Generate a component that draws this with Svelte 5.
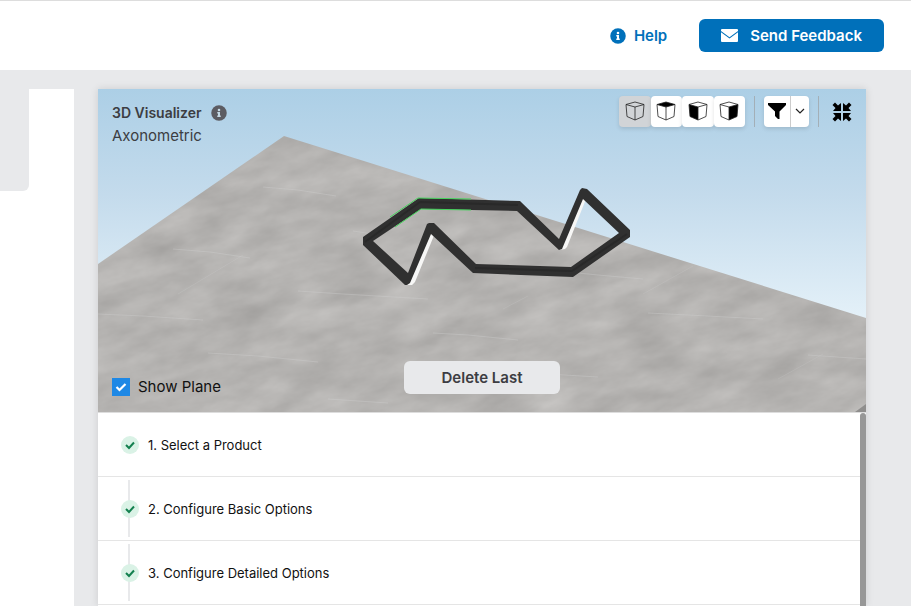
<script>
  let showPlane = $state(true);
  let view = $state('Axonometric');

  const views = [
    { name: 'Axonometric', face: '' },
    { name: 'Top', face: 'M1 3.500 10 1 19 3.500 10 6Z' },
    { name: 'Front', face: 'M1 3.500 10 6V19L2 15.500Z' },
    { name: 'Side', face: 'M19 3.500 10 6V19L18 15.500Z' }
  ];

  const steps = [
    '1. Select a Product',
    '2. Configure Basic Options',
    '3. Configure Detailed Options'
  ];
</script>

{#snippet info()}
  <svg class="info" viewBox="0 0 512 512" aria-hidden="true">
    <circle cx="256" cy="256" r="248" fill="currentColor" />
    <path class="info-mark" d="M256 118a42 42 0 1 1 0 84 42 42 0 0 1 0-84zM312 372c0 7-5 12-12 12h-88c-7 0-12-5-12-12v-24c0-7 5-12 12-12h12v-64h-12c-7 0-12-5-12-12v-24c0-7 5-12 12-12h64c7 0 12 5 12 12v100h12c7 0 12 5 12 12z" />
  </svg>
{/snippet}

<div class="page">
  <header>
    <a class="help" href="#help">{@render info()}Help</a>
    <button class="feedback" type="button">
      <svg viewBox="0 0 17 13" width="17" height="13" aria-hidden="true">
        <path d="M1 0H16Q17 0 17 1V2L8.500 8.300 0 2V1Q0 0 1 0ZM0 3.200 8.500 9.500 17 3.200V12Q17 13 16 13H1Q0 13 0 12Z" fill="#fff" />
      </svg>
      Send Feedback
    </button>
  </header>

  <main>
    <aside><div class="tab"></div></aside>

    <section class="panel">
      <div class="viewer">
        <svg class="scene" viewBox="0 0 768 323" preserveAspectRatio="xMidYMid slice" aria-hidden="true">
          <defs>
            <linearGradient id="sky" x1="0" y1="0" x2="0" y2="1">
              <stop offset="0" stop-color="#accfe6" />
              <stop offset=".33" stop-color="#c4dbec" />
              <stop offset=".7" stop-color="#e3f0f8" />
              <stop offset="1" stop-color="#eef6fb" />
            </linearGradient>
            <filter id="marble" x="0" y="0" width="100%" height="100%" color-interpolation-filters="sRGB">
              <feTurbulence type="fractalNoise" baseFrequency=".018 .045" numOctaves="5" seed="8" />
              <feColorMatrix values=".13 .05 0 0 .619  .13 .05 0 0 .612  .13 .05 0 0 .604  0 0 0 0 1" />
            </filter>
            <clipPath id="ground"><path d="M0 175 186 47 768 229V315L757 323H0Z" /></clipPath>
          </defs>
          <rect width="768" height="323" fill="url(#sky)" />
          {#if showPlane}
            <path d="M740 300H768V323H740Z" fill="#8f8e8d" />
            <g clip-path="url(#ground)">
              <g transform="rotate(-14 384 160)">
                <rect x="-80" y="-120" width="940" height="620" filter="url(#marble)" />
              </g>
              <g fill="none" stroke="#d0d0d0" stroke-opacity=".35">
                <path d="M165 98 200 101 238 107M75 160 112 163 152 169M255 142 275 145M200 202 245 205 330 210M0 225 45 227 105 231M335 244 370 246 420 251M110 264 160 267 220 273M550 224 610 227 665 230M470 183 500 186 545 190M710 266 768 270M450 285 500 288M230 310 290 314" />
                <path d="M545 205 595 177M80 205 145 166M405 220 430 207M680 290 725 265" stroke-opacity=".2" />
              </g>
            </g>
          {/if}
          <path d="M337 144 317 193 314 196 308 196 331 143ZM488 110 469 158 467 160 461 161 482 110Z" fill="#f7f7f6" />
          <path d="M265 148 321 109 422 112 461 150 482 101 484 99 489 100 532 141V148L475 188 375 184 333 145 312 194 309 196 307 196 265 156ZM275 152 310 184 329 135 331 134 336 134 378 175 473 178 521 144 485 110 464 160 461 161 419 122 323 120Z" fill="#303030" fill-rule="evenodd" />
          <path d="M267 153 322 113 420 116M377 179 474 182 529 145" fill="none" stroke="#292929" stroke-width="2" />
          <path d="M292 128 320 109 373 110M297 138 323 120 373 121" fill="none" stroke="#45d45c" />
        </svg>

        <div class="top">
          <div class="title">
            <h2>3D Visualizer {@render info()}</h2>
            <p>{view}</p>
          </div>
          <div class="tools">
            <div class="views">
              {#each views as v}
                <button type="button" class:active={view === v.name} aria-label={v.name} onclick={() => (view = v.name)}>
                  <svg viewBox="0 0 20 20" width="20" height="20" aria-hidden="true">
                    {#if v.face}<path d={v.face} fill="#000" />{/if}
                    <path d="M1 3.500 10 1 19 3.500 18 15.500 10 19 2 15.500ZM1 3.500 10 6 19 3.500M10 6V19" fill="none" stroke="#222" stroke-width=".8" stroke-linejoin="round" />
                  </svg>
                </button>
              {/each}
            </div>
            <span class="divider"></span>
            <div class="filter">
              <button type="button" aria-label="Filter">
                <svg viewBox="0 0 18 16" width="18" height="16" aria-hidden="true">
                  <path d="M0 0H18V2L11.500 8.500V16H10L7 13V8.500L0 2Z" />
                </svg>
              </button>
              <button class="more" type="button" aria-label="Filter options">
                <svg viewBox="0 0 10 6" width="10" height="6" aria-hidden="true">
                  <path d="M1 1 5 5 9 1" fill="none" stroke="#222" stroke-width="1.200" />
                </svg>
              </button>
            </div>
            <span class="divider"></span>
            <button class="shrink" type="button" aria-label="Exit full size">
              <svg viewBox="0 0 20 20" width="20" height="20" aria-hidden="true">
                <path id="arrow" d="M.5 3 3 .5 6 3.500 9 1V9H1L3.500 6Z" />
                <use href="#arrow" transform="matrix(-1 0 0 1 20 0)" />
                <use href="#arrow" transform="matrix(1 0 0 -1 0 20)" />
                <use href="#arrow" transform="matrix(-1 0 0 -1 20 20)" />
              </svg>
            </button>
          </div>
        </div>

        <div class="bottom">
          <label class="plane">
            <span class="box">
              <input type="checkbox" bind:checked={showPlane} />
              <svg viewBox="0 0 18 18" aria-hidden="true"><path d="M4.500 9 7.500 12 13.500 6" fill="none" stroke="#fff" stroke-width="2.200" /></svg>
            </span>
            Show Plane
          </label>
          <button class="delete" type="button">Delete Last</button>
        </div>
      </div>

      <div class="steps">
        <ol>
          {#each steps as step, i}
            <li class:linked={i > 0}>
              <span class="mark">
                <svg viewBox="0 0 18 18" width="18" height="18" aria-hidden="true">
                  <circle cx="9" cy="9" r="9" fill="#daf2e6" />
                  <path d="M5 9 8 12 13 6.500" fill="none" stroke="#14804f" stroke-width="2" />
                </svg>
              </span>
              {step}
            </li>
          {/each}
        </ol>
        <div class="scroll"></div>
      </div>
    </section>
  </main>
</div>

<style>
  :global(body) { margin: 0; }
  * { box-sizing: border-box; }
  .page {
    height: 100vh;
    display: flex;
    flex-direction: column;
    overflow: hidden;
    background: #e8e9eb;
    color: #111;
    font: 15px/20px Inter, "Liberation Sans", sans-serif;
  }
  button {
    display: flex;
    align-items: center;
    justify-content: center;
    padding: 0;
    border: 0;
    background: none;
    font: inherit;
    color: inherit;
    cursor: pointer;
  }
  header {
    flex: none;
    display: flex;
    align-items: center;
    justify-content: flex-end;
    gap: 32px;
    height: 70px;
    padding: 0 27px;
    border-top: 1px solid #ddd;
    background: #fff;
    font-weight: 600;
  }
  .help {
    display: flex;
    align-items: center;
    gap: 8px;
    color: #0070ba;
    text-decoration: none;
  }
  .info { width: 16px; height: 16px; flex: none; }
  .info-mark { fill: #fff; }
  .feedback {
    gap: 12px;
    height: 33px;
    padding: 0 22px;
    border-radius: 6px;
    background: #0070ba;
    color: #fff;
  }
  main {
    flex: 1;
    display: flex;
    gap: 24px;
    min-height: 0;
    padding: 19px 45px 0 0;
  }
  aside { width: 74px; flex: none; background: #fff; }
  .tab {
    width: 29px;
    height: 102px;
    border-bottom-right-radius: 6px;
    background: #e8e9eb;
  }
  .panel {
    flex: 1;
    min-width: 0;
    display: flex;
    flex-direction: column;
    background: #fff;
    box-shadow: 0 0 8px rgba(0, 0, 0, .12);
  }
  .viewer {
    position: relative;
    flex: none;
    display: flex;
    flex-direction: column;
    justify-content: space-between;
    height: 324px;
    border-bottom: 1px solid #ddd;
  }
  .scene { position: absolute; inset: 0; width: 100%; height: 100%; }
  .top {
    position: relative;
    display: flex;
    justify-content: space-between;
    align-items: flex-start;
    padding: 7px 14px;
  }
  .title { padding-top: 5px; color: #3c3d42; }
  h2, p { margin: 0; font-size: 15px; line-height: 23px; }
  h2 { display: flex; align-items: center; gap: 9px; font-size: 14px; font-weight: 600; }
  h2 .info { color: #5c5c62; }
  h2 .info-mark { fill: #c5d9e5; }
  .tools { display: flex; align-items: center; gap: 9px; }
  .views, .filter { display: flex; height: 31px; }
  .views { width: 126px; }
  .views button {
    flex: 1;
    padding-bottom: 1px;
    border-radius: 4px;
    background: #fff;
    box-shadow: 0 2px 4px rgba(0, 0, 0, .12);
  }
  .views .active { background: #d1d4d7; }
  .divider { width: 1px; height: 31px; background: #a3afb7; }
  .filter {
    border-radius: 4px;
    background: #fff;
    box-shadow: 0 2px 4px rgba(0, 0, 0, .12);
  }
  .filter button { width: 26px; padding-bottom: 2px; }
  .filter .more { width: 19px; border-left: 1px solid #ccc; }
  .shrink { width: 24px; height: 31px; justify-content: flex-end; }
  .bottom {
    position: relative;
    display: grid;
    grid-template-columns: 1fr auto 1fr;
    align-items: end;
    padding: 0 14px 15px;
  }
  .plane { display: flex; align-items: center; gap: 8px; }
  .box { display: grid; width: 18px; height: 18px; }
  .box input, .box svg { grid-area: 1 / 1; width: 18px; height: 18px; margin: 0; }
  .box input { appearance: none; background: #fff; }
  .box input:checked { background: #1e88e5; }
  .box svg { pointer-events: none; }
  .delete {
    width: 156px;
    height: 33px;
    margin-bottom: 3px;
    border-radius: 6px;
    background: #e8e9eb;
    color: #3c3d42;
    font-weight: 600;
  }
  .steps { flex: 1; display: flex; min-height: 0; }
  ol { flex: 1; margin: 0; padding: 0; list-style: none; font-size: 13px; }
  li {
    display: flex;
    align-items: center;
    gap: 9px;
    height: 64px;
    padding-left: 23px;
    border-bottom: 1px solid #e5e5e5;
  }
  .mark { display: flex; align-items: center; height: 57px; }
  .linked .mark { background: linear-gradient(#e8e9eb, #e8e9eb) 7px 0 / 2px 100% no-repeat; }
  .scroll { width: 6px; border-radius: 3px 3px 0 0; background: #979797; }
</style>
